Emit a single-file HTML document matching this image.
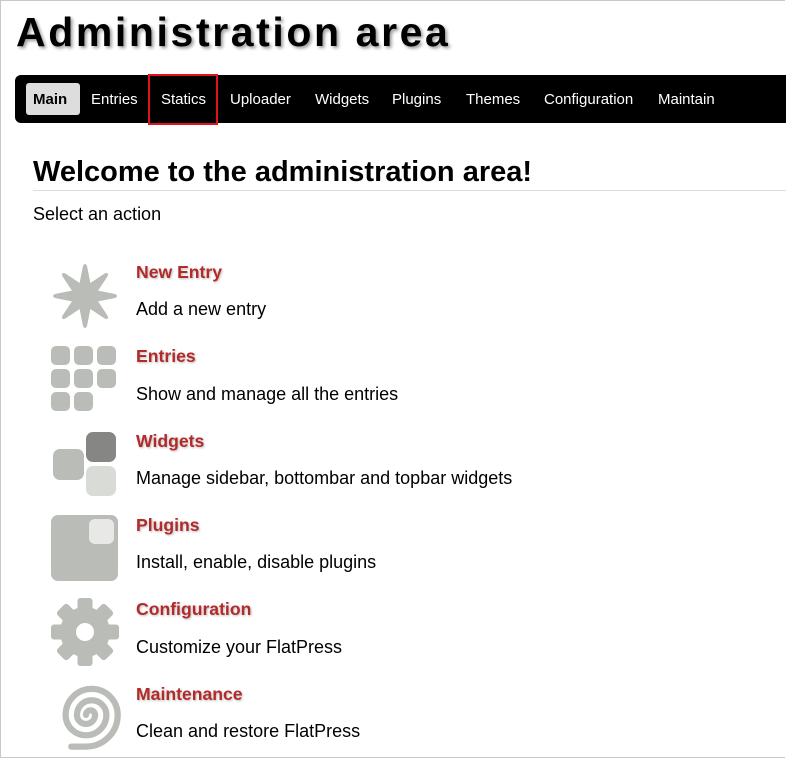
<!DOCTYPE html>
<html><head><meta charset="utf-8"><style>
body{margin:0;width:786px;height:759px;overflow:hidden;background:#fff;font-family:"Liberation Sans",Arial,sans-serif;position:relative}
.frame{position:absolute;left:0;top:0;width:784px;height:756px;border:1px solid #c8c8c8;border-right:none}
h1{position:absolute;left:16px;top:9px;margin:0;font-size:41px;letter-spacing:2.6px;font-weight:bold;text-shadow:2px 2px 3px #999}
.nav{position:absolute;left:15px;top:75px;width:780px;height:48px;background:#000;border-radius:6px}
.nav span{position:absolute;top:16px;color:#fff;font-size:15px}
.main{position:absolute;left:26px;top:83px;width:54px;height:32px;background:#ddd;border-radius:3px}
.red{position:absolute;left:148px;top:74px;width:66px;height:47px;border:2px solid #e0141e}
h2{position:absolute;left:33px;top:156px;margin:0;font-size:29px;font-weight:bold}
.hr{position:absolute;left:33px;top:190px;width:760px;height:1px;background:#ddd}
.t{position:absolute;left:136px;color:#b22a2a;font-weight:bold;font-size:17.6px;text-shadow:1px 1px 2px #bbb}
.d{position:absolute;left:136px;font-size:18px;color:#000}
svg{position:absolute}
</style></head><body>
<div class="frame"></div>
<h1>Administration area</h1>
<div class="nav"></div>
<div class="main"></div>
<div class="nav" style="background:none">
<span style="left:18px;color:#000;font-weight:bold">Main</span>
<span style="left:76px">Entries</span>
<span style="left:146px">Statics</span>
<span style="left:215px">Uploader</span>
<span style="left:300px">Widgets</span>
<span style="left:377px">Plugins</span>
<span style="left:451px">Themes</span>
<span style="left:529px">Configuration</span>
<span style="left:643px">Maintain</span>
</div>
<div class="red"></div>
<h2>Welcome to the administration area!</h2>
<div class="hr"></div>
<div class="d" style="top:204px;left:33px">Select an action</div>

<svg style="left:50px;top:262px" width="70" height="68" viewBox="-35 -34 70 68"><g fill="#babcb7"><g id="a"><path d="M-7 -5 L-2 -30 Q0 -34 2 -30 L7 -5Z"/></g><use href="#a" transform="rotate(45)"/><use href="#a" transform="rotate(90)"/><use href="#a" transform="rotate(135)"/><use href="#a" transform="rotate(180)"/><use href="#a" transform="rotate(225)"/><use href="#a" transform="rotate(270)"/><use href="#a" transform="rotate(315)"/><circle r="11"/></g></svg>
<div class="t" style="top:262px">New Entry</div><div class="d" style="top:299px">Add a new entry</div>

<svg style="left:50px;top:346px" width="70" height="66"><g fill="#babcb7"><rect x="1" y="0" width="19" height="19" rx="5"/><rect x="24" y="0" width="19" height="19" rx="5"/><rect x="47" y="0" width="19" height="19" rx="5"/><rect x="1" y="23" width="19" height="19" rx="5"/><rect x="24" y="23" width="19" height="19" rx="5"/><rect x="47" y="23" width="19" height="19" rx="5"/><rect x="1" y="46" width="19" height="19" rx="5"/><rect x="24" y="46" width="19" height="19" rx="5"/></g></svg>
<div class="t" style="top:346px">Entries</div><div class="d" style="top:384px">Show and manage all the entries</div>

<svg style="left:50px;top:431px" width="70" height="66"><rect x="3" y="18" width="31" height="31" rx="7" fill="#babcb7"/><rect x="36" y="1" width="30" height="30" rx="7" fill="#868784"/><rect x="36" y="35" width="30" height="30" rx="7" fill="#d9dbd6"/></svg>
<div class="t" style="top:431px">Widgets</div><div class="d" style="top:468px">Manage sidebar, bottombar and topbar widgets</div>

<svg style="left:50px;top:514px" width="70" height="68"><rect x="1" y="1" width="67" height="66" rx="7" fill="#babcb7"/><rect x="39" y="5" width="25" height="25" rx="6" fill="#e8e8e6"/></svg>
<div class="t" style="top:515px">Plugins</div><div class="d" style="top:552px">Install, enable, disable plugins</div>

<svg style="left:50px;top:598px" width="70" height="68" viewBox="-35 -34 70 68"><g fill="#babcb7"><circle r="25"/><g id="k"><rect x="-7.5" y="-34" width="15" height="16" rx="3"/></g><use href="#k" transform="rotate(45)"/><use href="#k" transform="rotate(90)"/><use href="#k" transform="rotate(135)"/><use href="#k" transform="rotate(180)"/><use href="#k" transform="rotate(225)"/><use href="#k" transform="rotate(270)"/><use href="#k" transform="rotate(315)"/></g><circle r="9" fill="#fff"/></svg>
<div class="t" style="top:599px">Configuration</div><div class="d" style="top:637px">Customize your FlatPress</div>

<svg style="left:50px;top:682px" width="72" height="70" viewBox="0 0 70 68"><g transform="translate(35 32) scale(1.1) translate(-35 -34)"><path fill="none" stroke="#babcb7" stroke-width="5.5" stroke-linecap="round" d="M35 34 a4 4 0 0 1 8 0 a8 8 0 0 1 -16 0 a13 13 0 0 1 26 0 a18 18 0 0 1 -36 0 a23 23 0 0 1 46 0 a28 28 0 0 1 -28 28 L22 62"/></g></svg>
<div class="t" style="top:684px">Maintenance</div><div class="d" style="top:721px">Clean and restore FlatPress</div>
</body></html>
